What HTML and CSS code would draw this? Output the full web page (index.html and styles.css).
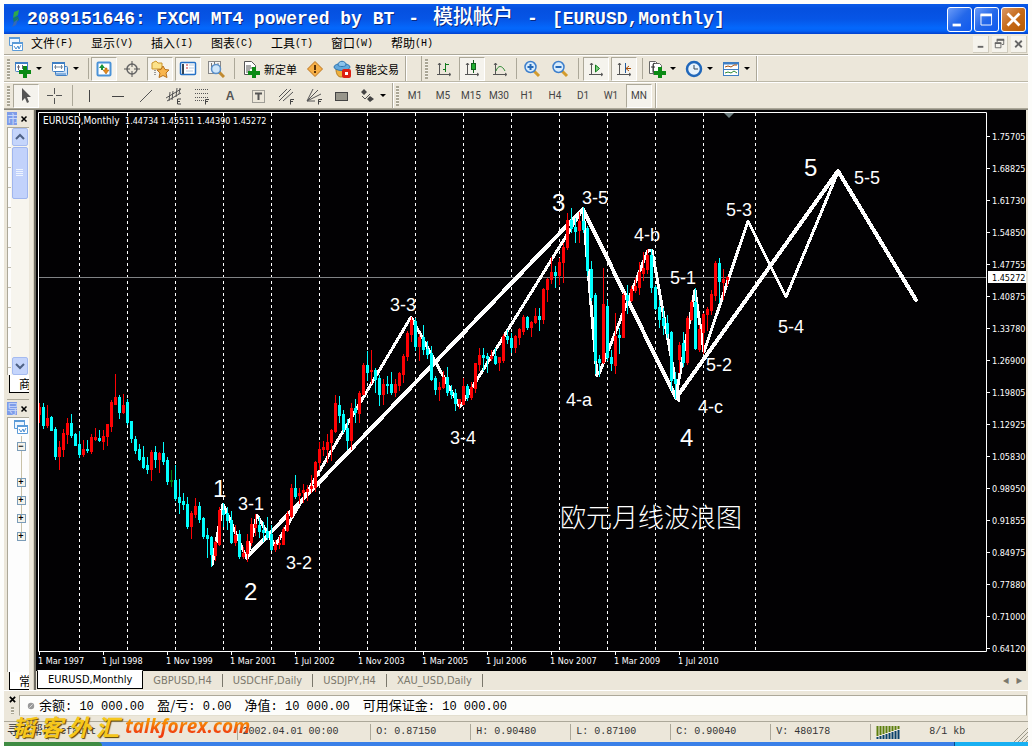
FILE: index.html
```html
<!DOCTYPE html>
<html lang="zh-CN">
<head>
<meta charset="utf-8">
<title>2089151646: FXCM MT4 powered by BT - 模拟帐户 - [EURUSD,Monthly]</title>
<link rel="stylesheet" href="styles.css">
</head>
<body>
<svg class="defs" aria-hidden="true">
  <defs>
    <symbol id="windows" viewBox="0 0 16 16"><path d="M1.500 1.500h10v8h-10z" fill="#eef6ff" stroke="#5b9bd8"/><path d="M1 2h11" stroke="#5b9bd8" stroke-width="2"/><path d="M4.500 6.500h10v8h-10z" fill="#fff" stroke="#5b9bd8"/><path d="M4 7h11" stroke="#5b9bd8" stroke-width="2"/><path d="M6 10l2 3 2-3 1 3 2-4" fill="none" stroke="#4b8fd2"/></symbol>
    <symbol id="newchart" viewBox="0 0 18 18"><rect x="1.500" y="2.500" width="12" height="9" rx="1" fill="#fff" stroke="#3f7fc4"/><path d="M1 3h13" stroke="#3f7fc4" stroke-width="2"/><path d="M4.500 5v5M3 7h3M8.500 5v4" stroke="#667"/><path d="M9 6h4v4h4v4h-4v4h-4v-4h-4v-4h4z" fill="#0b8a14"/></symbol>
    <symbol id="profiles" viewBox="0 0 18 18"><rect x="4.500" y="6.500" width="12" height="9" rx="1" fill="#cfe3f8" stroke="#3f7fc4"/><rect x="1.500" y="2.500" width="12" height="9" rx="1" fill="#fff" stroke="#3f7fc4"/><path d="M1 3h13" stroke="#3f7fc4" stroke-width="2"/><path d="M3 7h9M4.500 5v4M10.500 5v4" stroke="#789"/><path d="M5 14h10" stroke="#3f7fc4"/></symbol>
    <symbol id="market" viewBox="0 0 18 18"><rect x="2.500" y="2.500" width="13" height="13" rx="1" fill="#fff" stroke="#4b93d8" stroke-width="2"/><path d="M7 4l3 4h-2v2h-2v-2h-2z" fill="#16933a"/><path d="M11 14l-3-4h2v-2h2v2h2z" fill="#e58a1c" stroke="#a85c08" stroke-width=".5"/></symbol>
    <symbol id="target" viewBox="0 0 18 18"><circle cx="9" cy="9" r="5" fill="none" stroke="#666" stroke-width="1.500"/><path d="M9 1v6M9 11v6M1 9h6M11 9h6" stroke="#555"/></symbol>
    <symbol id="favorites" viewBox="0 0 18 18"><path d="M1 3l4-2 2 2h4v6h-10z" fill="#fce28a" stroke="#c9932b"/><path d="M4 10v5" stroke="#444" stroke-dasharray="1 1"/><path d="M12 6l2 3.500 4 .5-3 3 1 4.500-4-2-4 2 1-4.500-3-3 4-.5z" fill="#f8b54c" stroke="#b7701b"/></symbol>
    <symbol id="navigator" viewBox="0 0 18 18"><rect x="1.500" y="2.500" width="15" height="12" rx="1" fill="#fff" stroke="#2471c6" stroke-width="1.500"/><path d="M4 4v10" stroke="#345" stroke-width="2"/><path d="M7 5h2M7 8h2" stroke="#c33"/><path d="M10 5h5M10 8h5M7 11h7" stroke="#bcd"/></symbol>
    <symbol id="tester" viewBox="0 0 18 18"><rect x="1.500" y="1.500" width="12" height="12" fill="#f4f4f4" stroke="#888"/><path d="M4.500 3v7M7.500 2v6M11 3v5" stroke="#777"/><path d="M12 12l5 5" stroke="#c08a30" stroke-width="3"/><circle cx="9" cy="9" r="4.500" fill="#cfe6fa" stroke="#5a8fc8" stroke-width="1.500"/></symbol>
    <symbol id="order" viewBox="0 0 18 18"><path d="M2.500 1.500h7l4 4v9h-11z" fill="#fff" stroke="#555"/><path d="M4 6h5M4 8h6M4 10h4M4 12h3" stroke="#555"/><path d="M10 7h4v4h4v4h-4v3h-4v-3h-4v-4h4z" fill="#0b8a14"/></symbol>
    <symbol id="alert" viewBox="0 0 18 18"><path d="M9 1.500l7.500 7.500-7.500 7.500L1.500 9z" fill="#f6b048" stroke="#bd741c" stroke-linejoin="round"/><path d="M9 5v5M9 11v2" stroke="#5a3208" stroke-width="2"/></symbol>
    <symbol id="expert" viewBox="0 0 18 18"><path d="M3 9c0 5 2 8 5 8s6-3 6-8z" fill="#efb03c" stroke="#b47a1e"/><ellipse cx="9" cy="7" rx="8" ry="3.500" fill="#62a8dc" stroke="#2f75b0"/><path d="M5 5c0-5 8-5 8 0 0 2-8 2-8 0z" fill="#8cc4ec" stroke="#2f75b0"/><rect x="9" y="9" width="9" height="9" rx="2" fill="#dd1f13"/><rect x="12" y="12" width="3" height="3" fill="#fff"/></symbol>
    <symbol id="bars" viewBox="0 0 18 18"><path d="M4.500 3v12M2 14.500h13M3 5l1.500-2L6 5M14 13l2 1.500-2 1.500" fill="none" stroke="#555"/><path d="M10.500 3v9M8 9.500h2M11 4.500h3" stroke="#127a1c"/></symbol>
    <symbol id="candles" viewBox="0 0 18 18"><path d="M4.500 3v12M2 14.500h13M3 5l1.500-2L6 5M14 13l2 1.500-2 1.500" fill="none" stroke="#555"/><path d="M10.500 0v13" stroke="#125f1c"/><rect x="8.500" y="3.500" width="4" height="6" fill="#1fae2e" stroke="#125f1c"/></symbol>
    <symbol id="line" viewBox="0 0 18 18"><path d="M4.500 3v12M2 14.500h13M3 5l1.500-2L6 5M14 13l2 1.500-2 1.500" fill="none" stroke="#555"/><path d="M5 11c2-6 6-6 9 0" fill="none" stroke="#2e8a34"/></symbol>
    <symbol id="zoomin" viewBox="0 0 18 18"><path d="M11 11l5 5" stroke="#d39b2c" stroke-width="3"/><circle cx="7.500" cy="7" r="5.500" fill="#d8ecfc" stroke="#3d7fcc" stroke-width="1.500"/><path d="M7.500 4v6M4.500 7h6" stroke="#2469b8" stroke-width="2"/></symbol>
    <symbol id="zoomout" viewBox="0 0 18 18"><path d="M11 11l5 5" stroke="#d39b2c" stroke-width="3"/><circle cx="7.500" cy="7" r="5.500" fill="#d8ecfc" stroke="#3d7fcc" stroke-width="1.500"/><path d="M4.500 7h6" stroke="#2469b8" stroke-width="2"/></symbol>
    <symbol id="scroll" viewBox="0 0 18 18"><path d="M4.500 3v12M2 14.500h13M3 5l1.500-2L6 5M14 13l2 1.500-2 1.500" fill="none" stroke="#555"/><path d="M8.500 5v7l4-3.500z" fill="#7bd07f" stroke="#127a1c"/></symbol>
    <symbol id="shift" viewBox="0 0 18 18"><path d="M4.500 3v12M2 14.500h13M3 5l1.500-2L6 5M14 13l2 1.500-2 1.500" fill="none" stroke="#555"/><path d="M10.500 3v10" stroke="#205a9c"/><path d="M11 8.500h5M14 6l-3 2.500 3 2.500" fill="none" stroke="#a84e08"/></symbol>
    <symbol id="indicators" viewBox="0 0 18 18"><path d="M1.500 1.500h6l2 2v10h-8z" fill="#fff" stroke="#666"/><path d="M5.500 3.500h6l2 2v9h-8z" fill="#fff" stroke="#666"/><path d="M7 3.500c-2-1-2 1-2 3v6M3 7h4" fill="none" stroke="#333"/><path d="M10 7h4v4h4v4h-4v3h-4v-3h-4v-4h4z" fill="#0b8a14"/></symbol>
    <symbol id="clock" viewBox="0 0 18 18"><circle cx="9" cy="9" r="7" fill="#e8f3fc" stroke="#2067ba" stroke-width="2.500"/><path d="M9 5v4h4" fill="none" stroke="#345"/></symbol>
    <symbol id="template" viewBox="0 0 18 18"><rect x="1.500" y="2.500" width="15" height="13" fill="#fff" stroke="#3f7fc4"/><path d="M1 3.500h16" stroke="#3f7fc4" stroke-width="2"/><path d="M2 9.500h14" stroke="#3f7fc4"/><path d="M3 7l3-1 3 1 3-2h3" fill="none" stroke="#a84e08"/><path d="M3 13l3-1 3 1 3-2 3 2" fill="none" stroke="#2e8a34"/></symbol>
    <symbol id="cursor" viewBox="0 0 18 18"><path d="M5 1v13l3-3 2 5 2-1-2-5h4z" fill="#555"/></symbol>
    <symbol id="cross" viewBox="0 0 18 18"><path d="M9.500 1v6M9.500 11v6M2 8.500h6M11 8.500h6" stroke="#555"/></symbol>
    <symbol id="vline" viewBox="0 0 18 18"><path d="M8.500 3v12" stroke="#444"/></symbol>
    <symbol id="hline" viewBox="0 0 18 18"><path d="M3 9.500h12" stroke="#444"/></symbol>
    <symbol id="trend" viewBox="0 0 18 18"><path d="M3 15L15 3" stroke="#555"/></symbol>
    <symbol id="channel" viewBox="0 0 18 18"><path d="M1 11L16 2M2 14L16 6M5 5l-1 9M8 4l-1 9M12 1l-1 9M15 1l-1 6" stroke="#555"/><path d="M16 12h-3.500v5h3.500M12 14.500h3" fill="none" stroke="#444"/></symbol>
    <symbol id="fibo" viewBox="0 0 18 18"><path d="M2 2.500h14M2 6.500h14M2 10.500h14M2 13.500h9" stroke="#555" stroke-dasharray="1 1"/><path d="M16 12.500h-3.500v5M12 14.500h3" fill="none" stroke="#444"/></symbol>
    <symbol id="label" viewBox="0 0 18 18"><rect x="3.500" y="3.500" width="12" height="12" fill="none" stroke="#555" stroke-dasharray="1 1"/><path d="M6 6.500h7M9.500 6v7" stroke="#555" stroke-width="2"/></symbol>
    <symbol id="lines" viewBox="0 0 18 18"><path d="M2 10L10 2M2 14L14 2M6 14L16 5" stroke="#555"/><path d="M17 12.500h-3.500v5M13 14.500h3" fill="none" stroke="#444"/></symbol>
    <symbol id="fan" viewBox="0 0 18 18"><path d="M2 14L8 2M2 14L13 3M2 14L16 7M2 14h8" stroke="#555"/><path d="M17 12.500h-3.500v5M13 14.500h3" fill="none" stroke="#444"/></symbol>
    <symbol id="rect" viewBox="0 0 18 18"><rect x="2.500" y="5.500" width="12" height="8" fill="#98968b" stroke="#444"/></symbol>
    <symbol id="shapes" viewBox="0 0 18 18"><path d="M6 2l3 3-3 3-3-3zM12 9l4 3-4 3-3-3z" fill="#444"/><path d="M4 9l3 3 5-5" fill="none" stroke="#555"/></symbol>
  </defs>
</svg>

<div class="window">
  <header class="titlebar">
    <svg class="logo" viewBox="0 0 12 18"><path d="M4 2l5-2-1 5-5 3z" fill="#2fa84a"/><path d="M3 8l5-2 1 4-5 4z" fill="#157a6a"/><path d="M4 12l4-3-2 6-4 2z" fill="#3568b8"/></svg>
    <h1><span>2089151646: FXCM MT4 powered by BT</span><span>-</span><span class="han">模拟帐户</span><span>-</span><span>[EURUSD,Monthly]</span></h1>
    <div class="controls">
      <button class="ctl" aria-label="最小化"><svg viewBox="0 0 25 25"><path d="M5 18.500h9" stroke="#fff" stroke-width="3"/></svg></button>
      <button class="ctl" aria-label="最大化"><svg viewBox="0 0 25 25"><path d="M6.500 7v11.500h11.500v-11.500" fill="none" stroke="#fff"/><path d="M6 7.500h12.500" stroke="#fff" stroke-width="3"/></svg></button>
      <button class="ctl close" aria-label="关闭"><svg viewBox="0 0 25 25"><path d="M6 6l13 13M19 6L6 19" stroke="#fff" stroke-width="3"/></svg></button>
    </div>
  </header>

  <nav class="menubar">
    <svg class="ico16"><use href="#windows"/></svg>
    <button>文件<i>(F)</i></button><button>显示<i>(V)</i></button><button>插入<i>(I)</i></button><button>图表<i>(C)</i></button><button>工具<i>(T)</i></button><button>窗口<i>(W)</i></button><button>帮助<i>(H)</i></button>
    <div class="mdi">
      <button aria-label="最小化图表"><svg viewBox="0 0 16 16"><path d="M5 11h6" stroke="#666" stroke-width="2"/></svg></button>
      <button aria-label="还原图表"><svg viewBox="0 0 16 16"><path d="M5.500 6v-2.500h7v5h-2M3.500 7v5h6v-5z" fill="none" stroke="#666"/><path d="M3 7h7M5 3.500h8" stroke="#666" stroke-width="2"/></svg></button>
      <button aria-label="关闭图表"><svg viewBox="0 0 16 16"><path d="M4.500 4.500l7 7M11.500 4.500l-7 7" stroke="#666" stroke-width="2"/></svg></button>
    </div>
  </nav>

  <div class="toolbar">
    <div class="group">
      <span class="grip"></span>
      <button class="split" aria-label="新图表"><svg class="ico"><use href="#newchart"/></svg><b></b></button>
      <button class="split" aria-label="配置"><svg class="ico"><use href="#profiles"/></svg><b></b></button>
      <span class="sep"></span>
      <button class="tool on" aria-label="市场报价"><svg class="ico"><use href="#market"/></svg></button>
      <button class="tool" aria-label="数据窗口"><svg class="ico"><use href="#target"/></svg></button>
      <button class="tool on" aria-label="导航"><svg class="ico"><use href="#favorites"/></svg></button>
      <button class="tool on" aria-label="终端"><svg class="ico"><use href="#navigator"/></svg></button>
      <button class="tool" aria-label="测试"><svg class="ico"><use href="#tester"/></svg></button>
      <span class="sep wide"></span>
      <button class="named"><svg class="ico"><use href="#order"/></svg>新定单</button>
      <button class="tool" aria-label="编辑器"><svg class="ico"><use href="#alert"/></svg></button>
      <button class="named"><svg class="ico"><use href="#expert"/></svg>智能交易</button>
    </div>
    <div class="group second">
      <span class="grip"></span>
      <button class="tool" aria-label="柱状图"><svg class="ico"><use href="#bars"/></svg></button>
      <button class="tool on" aria-label="蜡烛图"><svg class="ico"><use href="#candles"/></svg></button>
      <button class="tool" aria-label="折线图"><svg class="ico"><use href="#line"/></svg></button>
      <span class="sep"></span>
      <button class="tool" aria-label="放大"><svg class="ico"><use href="#zoomin"/></svg></button>
      <button class="tool" aria-label="缩小"><svg class="ico"><use href="#zoomout"/></svg></button>
      <span class="sep wide"></span>
      <button class="tool on" aria-label="自动滚动"><svg class="ico"><use href="#scroll"/></svg></button>
      <button class="tool on" aria-label="图表平移"><svg class="ico"><use href="#shift"/></svg></button>
      <span class="sep wide"></span>
      <button class="split" aria-label="指标"><svg class="ico"><use href="#indicators"/></svg><b></b></button>
      <button class="split" aria-label="周期"><svg class="ico"><use href="#clock"/></svg><b></b></button>
      <button class="split last" aria-label="模板"><svg class="ico"><use href="#template"/></svg><b></b></button>
    </div>
  </div>

  <div class="toolbar lower">
    <div class="group">
      <span class="grip"></span>
      <button class="tool on" aria-label="光标"><svg class="ico"><use href="#cursor"/></svg></button>
      <button class="tool" aria-label="十字准线"><svg class="ico"><use href="#cross"/></svg></button>
      <span class="sep wide"></span>
      <button class="tool" aria-label="垂直线"><svg class="ico"><use href="#vline"/></svg></button>
      <button class="tool" aria-label="水平线"><svg class="ico"><use href="#hline"/></svg></button>
      <button class="tool" aria-label="趋势线"><svg class="ico"><use href="#trend"/></svg></button>
      <button class="tool" aria-label="等距通道"><svg class="ico"><use href="#channel"/></svg></button>
      <button class="tool" aria-label="斐波那契"><svg class="ico"><use href="#fibo"/></svg></button>
      <button class="tool letter">A</button>
      <button class="tool" aria-label="文字标签"><svg class="ico"><use href="#label"/></svg></button>
      <button class="tool" aria-label="斐波那契通道"><svg class="ico"><use href="#lines"/></svg></button>
      <button class="tool" aria-label="斐波那契扇形"><svg class="ico"><use href="#fan"/></svg></button>
      <button class="tool" aria-label="矩形"><svg class="ico"><use href="#rect"/></svg></button>
      <button class="split last" aria-label="图形"><svg class="ico"><use href="#shapes"/></svg><b></b></button>
    </div>
    <div class="group">
      <span class="grip"></span>
      <button class="tool">M1</button><button class="tool">M5</button><button class="tool">M15</button><button class="tool">M30</button><button class="tool">H1</button><button class="tool">H4</button><button class="tool">D1</button><button class="tool">W1</button><button class="tool on">MN</button>
    </div>
  </div>

  <main class="workspace">
    <aside class="side">
      <section class="panel market">
        <div class="phead"><span class="ptitle">市</span><button aria-label="关闭市场报价"><svg viewBox="0 0 8 8"><path d="M1.500 1.500l5 5M6.500 1.500l-5 5" stroke="#000" stroke-width="1.500"/></svg></button></div>
        <div class="pbody">
          <div class="rows"></div>
          <div class="scroll">
            <button class="sbtn" aria-label="向上"><svg viewBox="0 0 10 8"><path d="M1 6l4-4 4 4" fill="none" stroke="#4d6185" stroke-width="2"/></svg></button>
            <span class="thumb"><svg viewBox="0 0 8 8"><path d="M0 .5h7M0 2.500h7M0 4.500h7M0 6.500h7" stroke="#eef4fe"/></svg></span>
            <span class="fill"></span>
            <button class="sbtn" aria-label="向下"><svg viewBox="0 0 10 8"><path d="M1 2l4 4 4-4" fill="none" stroke="#4d6185" stroke-width="2"/></svg></button>
          </div>
        </div>
        <button class="ptab">商</button>
      </section>
      <section class="panel navigator">
        <div class="phead"><span class="ptitle">导</span><button aria-label="关闭导航"><svg viewBox="0 0 8 8"><path d="M1.500 1.500l5 5M6.500 1.500l-5 5" stroke="#000" stroke-width="1.500"/></svg></button></div>
        <div class="tree">
          <svg class="ico16"><use href="#windows"/></svg>
          <button class="node open" aria-label="折叠">−</button>
          <button class="node" aria-label="展开">+</button>
          <button class="node" aria-label="展开">+</button>
          <button class="node" aria-label="展开">+</button>
          <button class="node" aria-label="展开">+</button>
        </div>
        <button class="ptab">常</button>
      </section>
    </aside>
    <div class="center">
      <svg class="chart" id="chart" viewBox="36 110 990 560" role="img" aria-label="EURUSD Monthly">
        <rect x="36" y="110" width="990" height="560" fill="#020103"/>
        <g id="grid" stroke="#fff" stroke-dasharray="3 3" shape-rendering="crispEdges"></g>
        <path d="M39 277.500h947" stroke="#808285"/>
        <path d="M724 113h10l-5 5z" fill="#6d7e80"/>
        <g fill="none" stroke="#fff" stroke-linejoin="round" stroke-linecap="round" shape-rendering="crispEdges">
          <path stroke-width="3" d="M212 565L223 504L247 559L257 515L275 546L411 317L460 407L583 209L597 376M599 374L648 250H652L679 401M676 396L695 290L704 352L748 221L786 297L838 172"/>
          <path stroke-width="4" d="M248 556L583 209L676 398L838 171L916 300"/>
        </g>
        <g id="candlesticks" shape-rendering="crispEdges"></g>
        <path d="M38.500 651.500V112.500H986.500V651.500Z" fill="none" stroke="#fff"/>
        <g id="axes" class="num"></g>
        <rect x="988" y="271" width="38" height="12" fill="#fff"/>
        <text class="num price" x="992" y="281">1.45272</text>
        <text class="symbol" x="43" y="124">EURUSD,Monthly</text>
        <g class="num"><text x="125" y="124">1.44734</text><text x="161" y="124">1.45511</text><text x="197" y="124">1.44390</text><text x="233" y="124">1.45272</text></g>
        <g class="major"><text x="213" y="497">1</text><text x="244" y="600">2</text><text x="552" y="211">3</text><text x="680" y="446">4</text><text x="804" y="176">5</text></g>
        <g class="minor"><text x="238" y="510">3-1</text><text x="286" y="569">3-2</text><text x="390" y="311">3-3</text><text x="450" y="444">3-4</text><text x="582" y="204">3-5</text><text x="566" y="406">4-a</text><text x="634" y="241">4-b</text><text x="698" y="413">4-c</text><text x="670" y="284">5-1</text><text x="706" y="371">5-2</text><text x="726" y="216">5-3</text><text x="778" y="333">5-4</text><text x="854" y="184">5-5</text></g>
        <text class="caption" x="560" y="527">欧元月线波浪图</text>
      </svg>
      <div class="tabs">
        <button class="tab active">EURUSD,Monthly</button><button class="tab">GBPUSD,H4</button><button class="tab">USDCHF,Daily</button><button class="tab">USDJPY,H4</button><button class="tab">XAU_USD,Daily</button>
        <div class="arrows"><button aria-label="向左">◀</button><button aria-label="向右">▶</button></div>
      </div>
    </div>
  </main>

  <section class="terminal">
    <div class="tside"><svg viewBox="0 0 8 8"><path d="M1 1l6 6M7 1l-6 6" stroke="#000" stroke-width="2"/></svg><span class="grip short"></span></div>
    <div class="account">
      <svg class="dot" viewBox="0 0 10 10"><circle cx="5" cy="5" r="4" fill="#999"/><path d="M3 7l4-4" stroke="#eee"/></svg>
      <span>余额<i>: 10 000.00</i></span><span>盈/亏<i>: 0.00</i></span><span>净值<i>: 10 000.00</i></span><span>可用保证金<i>: 10 000.00</i></span>
    </div>
  </section>

  <footer class="status">
    <span class="cell help">寻求帮助</span>
    <span class="cell profile">Default</span>
    <span class="cell date">2002.04.01 00:00</span>
    <span class="cell">O: 0.87150</span>
    <span class="cell">H: 0.90480</span>
    <span class="cell">L: 0.87100</span>
    <span class="cell">C: 0.90040</span>
    <span class="cell">V: 480178</span>
    <span class="cell link"><svg viewBox="0 0 24 13"><path d="M1.500 0v10M4.500 0v9M7.500 0v8M10.500 0v7M13.500 0v6M16.500 0v5M19.500 0v4M22.500 0v3" stroke="#5d7f0c" stroke-width="2"/><path d="M1.500 11v2M4.500 10v3M7.500 9v4M10.500 8v5M13.500 7v6M16.500 6v7M19.500 5v8M22.500 4v9" stroke="#0a426c" stroke-width="2"/></svg>8/1 kb</span>
    <svg class="resize" viewBox="0 0 14 14"><path d="M0 14L14 0M4 14L14 4M8 14L14 8M12 14l2-2" stroke="#9a9788"/></svg>
    <div class="watermark"><span class="brush"><span>韬</span><span>客</span><span>外</span><span>汇</span></span><span class="site">talkforex.com</span></div>
  </footer>
  <div class="taskbar"><span class="start"></span><span class="tray"></span></div>
</div>
<script src="chart.js"></script>
</body>
</html>
```
FILE: styles.css
```css
* { box-sizing: border-box; }
body { margin: 0; background: #fdfdfb; font-family: "Liberation Sans", "Noto Sans CJK SC", sans-serif; font-size: 12px; color: #000; }
button { margin: 0; padding: 0; border: 0; background: none; font: inherit; color: inherit; display: flex; align-items: center; justify-content: center; }
h1 { margin: 0; }
i { font-style: normal; }
.defs { display: none; }
.window { display: flex; flex-direction: column; margin: 4px 4px 0; background: #ece7da; }
.ico { width: 18px; height: 18px; flex: none; }
.ico16 { width: 16px; height: 16px; flex: none; }

.titlebar { display: flex; align-items: center; height: 30px; padding: 0 2px 0 6px; background: linear-gradient(#0a5ae8, #0550df 15%, #0655e6 50%, #0468fc 80%, #0362f6 90%, #0340cc); color: #fff; }
.logo { width: 12px; height: 18px; margin-right: 5px; }
.titlebar h1 { display: flex; align-items: center; gap: 14px; flex: 1; font: bold 18px/24px "Liberation Mono", "Noto Sans CJK SC", monospace; text-shadow: 1px 1px 0 #0a2a80; white-space: nowrap; }
.titlebar .han { font-size: 20px; font-weight: 500; }
.controls { display: flex; gap: 2px; }
.ctl { width: 25px; height: 25px; border: 1px solid #fff; border-radius: 3px; background: linear-gradient(135deg, #6c9cf8, #2468ea 50%, #0f5af0); }
.ctl.close { background: linear-gradient(135deg, #d99868, #c66a18 50%, #b85c04); }
.ctl svg { width: 23px; height: 23px; }

.menubar { display: flex; align-items: center; height: 21px; padding: 0 1px 0 4px; border-bottom: 1px solid #aca899; }
.menubar > button { width: 60px; padding-left: 8px; justify-content: flex-start; font-size: 12px; line-height: 18px; }
.menubar > .ico16 { margin-right: -1px; }
.menubar i { font-family: "Liberation Mono", monospace; font-size: 10px; }
.mdi { display: flex; gap: 3px; margin-left: auto; }
.mdi button { width: 16px; height: 17px; background: #f5f3ec; border-right: 1px solid #cfcbbd; border-bottom: 1px solid #cfcbbd; }
.mdi svg { width: 16px; height: 16px; }

.toolbar { display: flex; height: 27px; border-top: 1px solid #fff; border-bottom: 1px solid #bcb8a8; }
.toolbar.lower { border-bottom-color: #aca899; }
.group { display: flex; align-items: center; padding: 0 2px 0 3px; border-right: 1px solid #aca899; box-shadow: 1px 0 #fff; }
.group.second { margin-left: 15px; border-left: 1px solid #aca899; }
.grip { width: 3px; height: 20px; margin-right: 2px; background: repeating-linear-gradient(#aaa695 0 2px, #f7f5ee 2px 3px); }
.grip.short { height: 7px; margin: 0; }
.sep { width: 4px; height: 21px; background: linear-gradient(#aca899, #aca899) center / 1px 100% no-repeat; }
.sep.wide { width: 8px; }
.tool { width: 28px; height: 24px; font: 10px/12px "Roboto", sans-serif; color: #444; }
.tool.on { width: 26px; margin: 0 1px; border: 1px solid #aca899; border-right-color: #fff; border-bottom-color: #fff; background: #f5f3ed; }
.tool.letter { font: bold 12px/16px "Liberation Sans", sans-serif; color: #555; }
.split { width: 37px; height: 24px; justify-content: flex-start; padding-left: 2px; gap: 4px; }
.split.last { width: 34px; }
.split b { border: 3px solid transparent; border-top-color: #000; border-bottom: 0; }
.named { height: 24px; padding: 0 4px; gap: 4px; font: 11px/14px "Noto Sans CJK SC", sans-serif; }

.workspace { display: flex; border-top: 1px solid #8b887c; }
.side { display: flex; flex-direction: column; width: 30px; flex: none; padding: 0 4px 0 3px; border-right: 1px solid #d5cfbe; }
.panel { display: flex; flex-direction: column; min-height: 0; }
.panel.market { height: 290px; border-bottom: 1px solid #aca899; padding-bottom: 6px; }
.panel.navigator { flex: 1; }
.phead { display: flex; align-items: center; justify-content: space-between; height: 17px; padding-right: 1px; }
.phead button, .phead svg { width: 8px; height: 8px; }
.ptitle { width: 10px; height: 13px; overflow: hidden; background: #7e9ce8; color: #c9d8fa; font: 12px/13px "Noto Sans CJK SC", sans-serif; }
.pbody { display: flex; flex: 1; background: #fdfdfd; border-top: 1px solid #aca899; }
.rows { width: 4px; border-left: 1px solid #aca899; background: repeating-linear-gradient(#fdfdfd 0 19px, #c2beb0 19px 20px); }
.scroll { display: flex; flex-direction: column; flex: 1; background: #f7f5ee; }
.sbtn { height: 18px; margin: 0 1px; border: 1px solid #a5bbf0; border-radius: 2px; background: #c5d5fb; }
.sbtn svg { width: 10px; height: 8px; }
.thumb { display: flex; align-items: center; justify-content: center; height: 52px; margin: 1px 1px 0; border: 1px solid #a0b6ee; border-radius: 2px; background: #c2d2fb; }
.thumb svg { width: 8px; height: 8px; }
.fill { flex: 1; }
.ptab { align-self: flex-end; width: 20px; height: 18px; padding-left: 9px; justify-content: flex-start; overflow: hidden; border: solid #000; border-width: 0 0 1px 1px; background: #fff; font: 12px/16px "Noto Sans CJK SC", sans-serif; }
.tree { display: flex; flex-direction: column; align-items: center; flex: 1; gap: 9px; padding: 1px 0 0 5px; border-left: 1px solid #aca899; border-top: 1px solid #aca899; background: linear-gradient(#c9c2a8, #c9c2a8) 13px 18px / 1px 98px no-repeat, #fdfdfd; }
.tree .ico16 { margin-bottom: -2px; }
.node { width: 9px; height: 9px; border: 1px solid #7b9cb8; background: #f5f3ea; font: bold 9px/7px "Liberation Sans", sans-serif; }
.node.open { margin-bottom: 18px; }

.center { display: flex; flex-direction: column; flex: 1; min-width: 0; padding-right: 2px; border-left: 2px solid #6f6c62; }
.chart { display: block; width: 100%; height: auto; }
.symbol { font: 10px "DejaVu Sans Condensed", "DejaVu Sans", sans-serif; fill: #fff; }
.num { font: 9px "DejaVu Sans Condensed", "DejaVu Sans", sans-serif; fill: #fff; }
.num.price { fill: #000; }
.major { font: 24px "Liberation Sans", sans-serif; fill: #fff; }
.minor { font: 18px "Liberation Sans", sans-serif; fill: #fff; }
.caption { font: 300 26px "Noto Sans CJK SC", sans-serif; fill: #fff; }

.tabs { display: flex; height: 20px; border-top: 1px solid #000; font: 11px/18px "DejaVu Sans Condensed", "DejaVu Sans", sans-serif; color: #7b786c; }
.tab { position: relative; height: 13px; margin-top: 3px; padding: 0 10px; border-right: 1px solid #7b786c; }
.tab.active { height: 19px; margin: -1px 0 0 1px; border: 1px solid #000; border-top-color: #fff; background: #fff; color: #000; }
.arrows { display: flex; gap: 8px; margin-left: auto; padding-right: 4px; font-size: 8px; }

.terminal { display: flex; height: 32px; padding: 4px 1px 5px 3px; border-top: 1px solid #fff; border-bottom: 1px solid #aca899; }
.tside { display: flex; flex-direction: column; align-items: center; gap: 4px; width: 10px; padding-top: 1px; }
.tside svg { width: 7px; height: 7px; }
.account { display: flex; align-items: center; gap: 13px; flex: 1; padding-left: 7px; margin-left: 2px; border: 1px solid #aca899; border-bottom-color: #e3dfd0; background: #fdfdfb; font: 13px/18px "Noto Sans CJK SC", sans-serif; white-space: nowrap; }
.account i { font: 12px/18px "Liberation Mono", monospace; }
.dot { width: 8px; height: 8px; margin-right: -9px; }

.status { position: relative; display: flex; align-items: center; height: 20px; font: 10px/16px "Liberation Mono", "Noto Sans CJK SC", monospace; color: #333; white-space: nowrap; }
.cell { flex: 98 1 0; padding-left: 5px; border-left: 1px solid #aca899; }
.cell.help { flex: 43 1 0; padding-left: 3px; border: 0; overflow: hidden; font-size: 12px; }
.cell.profile { flex: 190 1 0; }
.cell.date { flex: 133 1 0; }
.cell.link { display: flex; align-items: center; gap: 29px; flex: 158 1 0; }
.link svg { width: 24px; height: 13px; }
.resize { position: absolute; right: 0; bottom: 0; width: 14px; height: 14px; }
.watermark { position: absolute; left: 8px; bottom: 1px; display: flex; align-items: center; gap: 6px; line-height: 30px; }
.brush { display: flex; gap: 5px; font: italic bold 23px/30px "Noto Sans CJK SC", sans-serif; color: #f6c71c; text-shadow: 1px 1px 1px #5a4200; }
.site { font: italic bold 19px/30px "Open Sans", sans-serif; color: transparent; background: linear-gradient(#f8a400 25%, #f03c10 75%); background-clip: text; -webkit-background-clip: text; }
.taskbar { display: flex; justify-content: space-between; height: 4px; background: #3a80e8; }
.start { width: 98px; background: #3f8b42; border-radius: 0 4px 0 0; }
.tray { width: 74px; background: #19b0f2; border-left: 1px solid #0b4a8c; }
```
FILE: chart.js
```js
// Each bar: direction (R up, C down, G flat), high, body top, body bottom, low.
const bars = `R403 407 414 422,C403 407 425 428,R405 418 425 427,C416 417 430 430,C427 429 456 459,R441 447 456 469,R429 433 449 456,R418 423 434 443,C414 423 435 437,C433 434 445 445,
C431 444 454 457,R440 449 454 456,C440 449 450 452,R434 437 451 453,R428 437 439 440,C430 438 440 441,R430 436 441 449,R424 424 436 445,R400 402 426 431,R374 397 404 404,
C395 397 412 418,R394 405 412 413,C399 402 422 424,C421 421 438 442,C436 439 450 453,C444 449 459 460,C446 457 467 468,C457 465 469 473,R450 452 469 480,C446 452 459 467,
R452 453 459 472,C442 453 461 464,C457 460 481 484,G470 480 481 486,C465 480 498 500,C479 497 502 513,C493 501 504 509,C497 504 526 528,R511 513 526 538,R498 506 514 517,
C502 506 519 522,C517 518 536 538,C528 535 538 557,C536 537 554 566,R541 542 555 560,R507 510 544 545,C503 510 514 526,C507 513 520 529,C511 520 542 543,R525 535 542 545,
C530 534 556 558,R547 553 556 558,R534 541 553 561,R518 524 542 545,R514 524 527 535,C517 525 531 537,C522 530 532 541,C517 531 537 539,C525 534 549 550,R540 544 549 551,
R536 543 544 548,R527 529 544 544,R511 514 530 531,R484 488 516 517,C475 488 496 498,R488 493 495 503,R484 490 492 502,R485 489 491 500,R475 486 488 492,R461 462 487 491,
R442 449 462 469,R441 447 449 455,R434 442 449 462,R429 430 442 460,R395 403 431 432,C396 405 415 422,C410 414 429 432,C419 428 440 449,R403 408 440 449,C399 408 412 422,
R391 393 413 422,R363 365 394 394,C351 365 372 380,R350 370 371 383,C368 370 379 392,C375 378 394 405,R379 384 394 404,C376 384 385 393,C372 384 392 394,R379 384 392 396,
R372 373 385 390,R354 356 374 382,R331 333 356 360,R317 320 334 341,C318 321 346 350,R334 337 346 360,C325 337 349 354,C341 349 354 358,C346 353 379 380,C376 378 389 394,
R382 387 389 400,R371 377 387 388,C367 377 392 395,C385 391 394 398,C389 393 403 410,R399 399 403 408,R378 386 404 404,C384 386 397 400,R382 387 397 399,R363 363 388 392,
R348 355 364 370,C348 355 357 370,C353 356 358 372,R350 356 358 360,C348 356 363 364,R357 357 362 370,R334 336 360 362,C330 336 339 343,C333 338 347 352,R335 336 347 352,
R328 329 337 344,R315 317 331 334,C316 317 327 329,R321 322 327 336,R308 316 322 323,C308 316 319 330,R288 289 319 323,R278 279 289 301,R257 272 279 283,C266 272 275 287,
R258 262 275 284,R243 247 262 282,R213 220 247 249,C208 220 228 232,C218 227 231 242,R212 221 230 242,C207 221 229 232,C226 228 270 275,C261 269 297 300,C293 295 360 373,
C355 359 362 376,R268 304 362 363,C300 306 357 360,C350 357 363 370,R313 336 365 373,C328 335 337 353,R293 295 337 337,C285 295 300 313,R286 289 300 301,R278 286 290 292,
R262 272 287 294,R252 268 273 280,R249 255 269 273,C249 255 287 292,C285 287 308 309,C300 307 319 327,C308 318 325 334,C315 323 333 337,C331 332 380 390,C372 379 383 398,
R342 345 359 372,C332 343 362 366,R316 318 362 364,R300 302 319 320,C288 302 348 349,R325 329 349 351,R313 314 332 353,R307 309 314 330,R290 294 310 314,R261 263 295 300,
C258 263 281 302,R269 279 282 299,R276 277 279 285`;
const colors = { R: '#fe0204', C: '#02fefe', G: '#007a10' };
let out = '';
bars.split(',').forEach((bar, i) => {
  const s = bar.trim();
  const [high, top, bottom, low] = s.slice(1).split(' ').map(Number);
  const x = 39 + 4 * i;
  out += `<path fill="${colors[s[0]]}" d="M${x} ${high}h1V${top}h-1zM${x} ${bottom}h1V${low + 1}h-1zM${x - 1} ${top}h3V${bottom + 1}h-3z"/>`;
});
document.getElementById('candlesticks').innerHTML = out;

let grid = '';
for (let x = 79; x <= 703; x += 48) grid += `<path d="M${x}.5 113V651"/>`;
grid += '<path d="M755.5 113V651"/>';
document.getElementById('grid').innerHTML = grid;

const prices = ['1.75705', '1.68825', '1.61730', '1.54850', '1.47755', '1.40875', '1.33780', '1.26900', '1.19805', '1.12925', '1.05830', '0.98950', '0.91855', '0.84975', '0.77880', '0.71000', '0.64120'];
const dates = ['1 Mar 1997', '1 Jul 1998', '1 Nov 1999', '1 Mar 2001', '1 Jul 2002', '1 Nov 2003', '1 Mar 2005', '1 Jul 2006', '1 Nov 2007', '1 Mar 2009', '1 Jul 2010'];
document.getElementById('axes').innerHTML =
  prices.map((p, i) => `<path stroke="#fff" d="M987 ${136 + 32 * i}.5h3"/><text x="992" y="${140 + 32 * i}">${p}</text>`).join('') +
  dates.map((d, i) => `<path stroke="#fff" d="M${39 + 64 * i}.5 652v3"/><text x="${38 + 64 * i}" y="664">${d}</text>`).join('');
```
